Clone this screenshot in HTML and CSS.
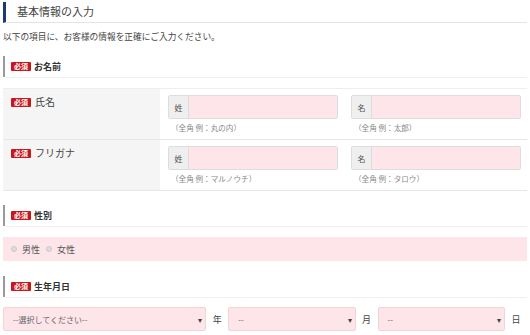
FILE: index.html
```html
<!DOCTYPE html>
<html lang="ja">
<head>
<meta charset="utf-8">
<link rel="stylesheet" href="styles.css">
</head>
<body>
<div class="page">
  <h2 class="title">基本情報の入力</h2>
  <p class="intro">以下の項目に、お客様の情報を正確にご入力ください。</p>

  <div class="sec-head sec-first"><span class="badge">必須</span><span class="sec-text">お名前</span></div>
  <div class="table">
    <div class="row">
      <div class="label"><span class="badge">必須</span><span class="label-text">氏名</span></div>
      <div class="cell">
        <div class="field">
          <div class="input"><span class="prefix">姓</span><span class="box"></span></div>
          <div class="hint">（全角 例：丸の内）</div>
        </div>
        <div class="field">
          <div class="input"><span class="prefix">名</span><span class="box"></span></div>
          <div class="hint">（全角 例：太郎）</div>
        </div>
      </div>
    </div>
    <div class="row">
      <div class="label"><span class="badge">必須</span><span class="label-text">フリガナ</span></div>
      <div class="cell">
        <div class="field">
          <div class="input"><span class="prefix">姓</span><span class="box"></span></div>
          <div class="hint">（全角 例：マルノウチ）</div>
        </div>
        <div class="field">
          <div class="input"><span class="prefix">名</span><span class="box"></span></div>
          <div class="hint">（全角 例：タロウ）</div>
        </div>
      </div>
    </div>
  </div>

  <div class="sec-head sec-gap"><span class="badge">必須</span><span class="sec-text">性別</span></div>
  <div class="radios">
    <label class="radio"><span class="dot"></span>男性</label>
    <label class="radio"><span class="dot"></span>女性</label>
  </div>

  <div class="sec-head sec-gap2"><span class="badge">必須</span><span class="sec-text">生年月日</span></div>
  <div class="dates">
    <div class="select sel-year"><span>--選択してください--</span><span class="arrow">▾</span></div>
    <span class="unit">年</span>
    <div class="select sel-small"><span>--</span><span class="arrow">▾</span></div>
    <span class="unit">月</span>
    <div class="select sel-small"><span>--</span><span class="arrow">▾</span></div>
    <span class="unit">日</span>
  </div>
</div>
</body>
</html>
```
FILE: styles.css
```css
* { box-sizing: border-box; }
html, body { margin: 0; padding: 0; background: #fff; }
body {
  font-family: "Noto Sans CJK JP", "Noto Sans", sans-serif;
  color: #444;
  font-size: 10px;
}
.page { padding: 2px 3px 0 3px; width: 530px; }
.title {
  margin: 0;
  font-size: 11px;
  font-weight: normal;
  color: #444;
  height: 21px;
  line-height: 19px;
  border-left: 3px solid #1d3a78;
  padding-left: 11px;
  border-bottom: 1px solid #e4e4e4;
}
.intro {
  margin: 7px 0 0 0;
  font-size: 8.7px;
  line-height: 13px;
  color: #444;
}
.sec-head {
  margin-top: 8px;
  height: 21px;
  display: flex;
  align-items: center;
  border-left: 2px solid #9a9a9a;
  padding-left: 6px;
  position: relative;
}
.sec-head::after {
  content: "";
  position: absolute;
  left: 0; right: 0; bottom: -1px;
  height: 1px;
  background: #f0f0f0;
}
.sec-first { margin-top: 13px; }
.sec-gap { margin-top: 14px; }
.sec-gap2 { margin-top: 15px; }
.badge {
  display: inline-block;
  background: #c8161d;
  color: #fff;
  font-size: 7px;
  line-height: 9px;
  height: 9px;
  padding: 0 3px;
  border-radius: 1px;
  font-weight: bold;
}
.sec-text { margin-left: 3px; font-weight: bold; font-size: 9px; color: #333; }
.table { margin-top: 11px; border-top: 1px solid #eee; }
.row { display: flex; height: 51px; border-bottom: 1px solid #e6e6e6; }
.label {
  width: 157px;
  background: #f5f5f5;
  padding: 6px 0 0 8px;
  display: flex;
  align-items: flex-start;
  gap: 4px;
}
.label .badge { margin-top: 3px; }
.label-text { font-size: 10px; color: #444; line-height: 14px; }
.cell { flex: 1; display: flex; gap: 13px; padding: 6px 0 0 8px; }
.field { width: 170px; }
.input {
  display: flex;
  height: 24px;
  border: 1px solid #ddd;
  border-radius: 2px;
  overflow: hidden;
}
.prefix {
  width: 20px;
  background: #efefef;
  border-right: 1px solid #ddd;
  font-size: 8px;
  color: #555;
  display: flex;
  align-items: center;
  justify-content: center;
}
.box { flex: 1; background: #fde5ea; }
.hint { font-size: 7.6px; color: #888; margin-top: 3px; padding-left: 3px; line-height: 11px; }
.radios {
  margin-top: 11px;
  height: 24px;
  background: #fde5ea;
  display: flex;
  align-items: center;
  padding-left: 8px;
  gap: 6px;
}
.radio { display: flex; align-items: center; font-size: 9px; color: #555; }
.dot {
  width: 6px; height: 6px;
  border-radius: 50%;
  background: #ddd;
  border: 1px solid #c8c8c8;
  margin-right: 5px;
}
.dates { margin-top: 10px; display: flex; align-items: center; }
.select {
  height: 24px;
  background: #fde5ea;
  border: 1px solid #f3d2d8;
  border-radius: 2px;
  display: flex;
  align-items: center;
  justify-content: space-between;
  padding: 0 3px 0 9px;
  font-size: 8px;
  color: #666;
}
.sel-year { width: 204px; }
.sel-small { width: 128px; }
.arrow { font-size: 8px; color: #444; }
.unit { width: 22px; text-align: center; font-size: 9px; color: #444; }
```
